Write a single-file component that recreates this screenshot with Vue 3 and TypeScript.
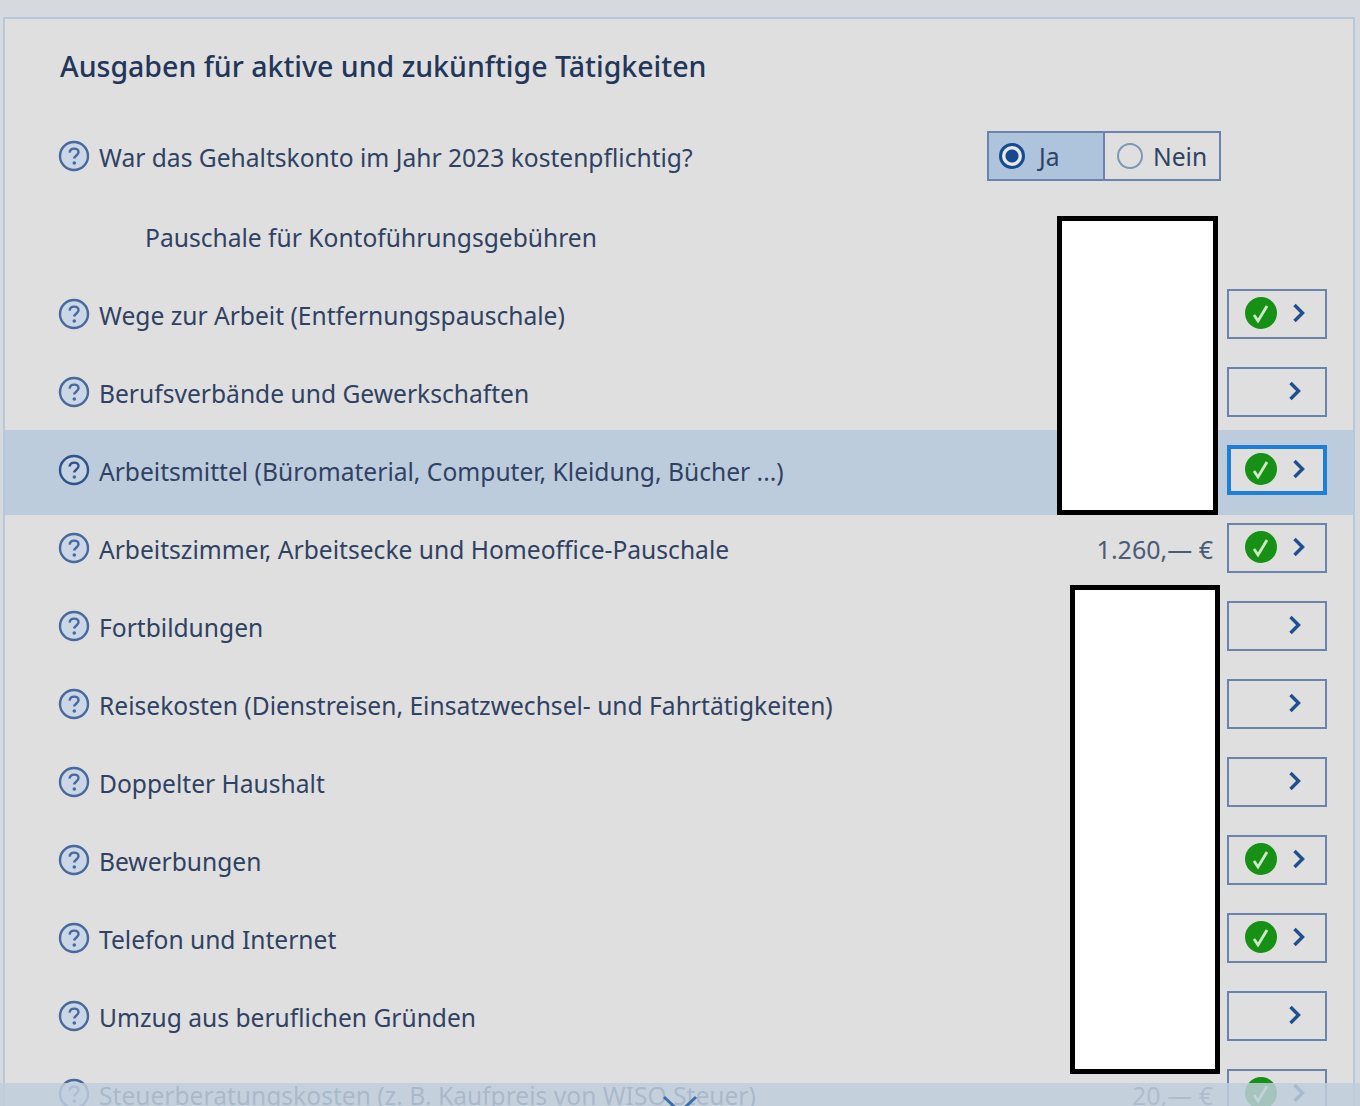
<script setup lang="ts">
interface Row {
  label: string
  indent?: boolean
  help?: boolean
  check?: boolean
  amount?: string
  active?: boolean
  noButton?: boolean
}

const rows: Row[] = [
  { label: 'Pauschale für Kontoführungsgebühren', indent: true, noButton: true },
  { label: 'Wege zur Arbeit (Entfernungspauschale)', help: true, check: true },
  { label: 'Berufsverbände und Gewerkschaften', help: true },
  { label: 'Arbeitsmittel (Büromaterial, Computer, Kleidung, Bücher ...)', help: true, check: true, active: true },
  { label: 'Arbeitszimmer, Arbeitsecke und Homeoffice-Pauschale', help: true, check: true, amount: '1.260,— €' },
  { label: 'Fortbildungen', help: true },
  { label: 'Reisekosten (Dienstreisen, Einsatzwechsel- und Fahrtätigkeiten)', help: true },
  { label: 'Doppelter Haushalt', help: true },
  { label: 'Bewerbungen', help: true, check: true },
  { label: 'Telefon und Internet', help: true, check: true },
  { label: 'Umzug aus beruflichen Gründen', help: true },
  { label: 'Steuerberatungskosten (z. B. Kaufpreis von WISO Steuer)', help: true, check: true, amount: '20,— €' }
]
</script>

<template>
  <div class="page">
    <section class="panel">
      <h1 class="title">Ausgaben für aktive und zukünftige Tätigkeiten</h1>

      <div class="row first-row">
        <svg class="help" viewBox="0 0 32 32" aria-hidden="true">
          <circle cx="16" cy="16" r="14" />
          <path d="M11.6 12.600c.3-2.600 2.200-4 4.600-4 2.600 0 4.300 1.500 4.300 3.600 0 3.200-4.200 3.300-4.200 6.400" />
          <circle class="dot" cx="16.300" cy="23" r="1.800" />
        </svg>
        <span class="label">War das Gehaltskonto im Jahr 2023 kostenpflichtig?</span>
        <div class="segment">
          <div class="option selected">
            <span class="radio on"></span>
            <span>Ja</span>
          </div>
          <div class="option">
            <span class="radio"></span>
            <span>Nein</span>
          </div>
        </div>
      </div>

      <div v-for="row in rows" :key="row.label" class="row" :class="{ active: row.active }">
        <svg v-if="row.help" class="help" viewBox="0 0 32 32" aria-hidden="true">
          <circle cx="16" cy="16" r="14" />
          <path d="M11.6 12.600c.3-2.600 2.200-4 4.600-4 2.600 0 4.300 1.500 4.300 3.600 0 3.200-4.200 3.300-4.200 6.400" />
          <circle class="dot" cx="16.300" cy="23" r="1.800" />
        </svg>
        <span class="label" :class="{ indent: row.indent }">{{ row.label }}</span>
        <span v-if="row.amount" class="amount">{{ row.amount }}</span>
        <button v-if="!row.noButton" class="go" :class="{ focus: row.active, checked: row.check }" type="button">
          <svg v-if="row.check" class="ok" viewBox="0 0 32 32" aria-hidden="true">
            <circle cx="16" cy="16" r="16" />
            <path d="M9 18l4 6L22 9" />
          </svg>
          <svg class="chev" viewBox="0 0 14 20" aria-hidden="true">
            <path d="M2.500 2l8 8-8 8" />
          </svg>
        </button>
      </div>

      <div class="redact first"></div>
      <div class="redact second"></div>
    </section>

    <div class="footer-fade">
      <svg class="scroll-hint" viewBox="0 0 36 23" aria-hidden="true">
        <path d="M2 14l16 15 16-15" />
      </svg>
    </div>
  </div>
</template>

<style>
html,
body {
  margin: 0;
  height: 1106px;
  overflow: hidden;
  background: #d6dadf;
}
</style>

<style scoped>
.page {
  position: relative;
  height: 1106px;
  overflow: hidden;
  padding: 17px 5px 0 3px;
  box-sizing: border-box;
  background: #d6dadf;
  font-family: "Noto Sans", "Open Sans", sans-serif;
  color: #2f4263;
}

.panel {
  position: relative;
  height: 1200px;
  box-sizing: border-box;
  border: 2px solid #b7c8da;
  background: #dfdfdf;
  padding-top: 28px;
}

.title {
  margin: 0 0 32px 55px;
  height: 38px;
  font-size: 28.500px;
  line-height: 38px;
  font-weight: 500;
  color: #22365a;
}

.row {
  display: flex;
  align-items: center;
  height: 78px;
  padding: 0 26px 0 53px;
  box-sizing: border-box;
}

.row.first-row {
  height: 80px;
  padding-bottom: 2px;
}

.row.active {
  height: 85px;
  margin: -1px 0 -6px;
  padding-bottom: 5px;
  background: #bdccdc;
}

.row.active .help {
  stroke: #2f5488;
}

.help {
  flex: none;
  width: 32px;
  height: 32px;
  margin-right: 9px;
  fill: none;
  stroke: #47699c;
  stroke-width: 2.400;
}

.help circle:first-child {
  fill: #cbd7e6;
}

.row.active .help circle:first-child {
  fill: #c5d3e3;
}

.help .dot {
  fill: #47699c;
  stroke: none;
}

.label {
  flex: 1;
  padding-top: 3px;
  font-size: 24.600px;
  line-height: 34px;
  white-space: nowrap;
}

.label.indent {
  padding-left: 87px;
}

.amount {
  margin-right: 14px;
  padding-top: 1px;
  font-size: 25px;
  line-height: 34px;
  color: #4a5c78;
}

.segment {
  display: flex;
  width: 234px;
  height: 50px;
  margin-right: 106px;
  box-sizing: border-box;
  border: 2px solid #6a84ad;
}

.option {
  display: flex;
  align-items: center;
  gap: 10px;
  padding-left: 12px;
  font-size: 24.600px;
  box-sizing: border-box;
  flex: 1;
}

.option + .option {
  border-left: 2px solid #6a84ad;
}

.option.selected {
  width: 114px;
  flex: none;
  gap: 14px;
  padding-left: 10px;
  background: #aec3dc;
}

.radio {
  flex: none;
  width: 26px;
  height: 26px;
  box-sizing: border-box;
  border: 2px solid #7c97b8;
  border-radius: 50%;
  background: #dfdfdf;
}

.radio.on {
  border: 3px solid #174a8c;
  background: radial-gradient(circle, #174a8c 0 6px, #e4e8ee 7px);
}

.go {
  flex: none;
  display: flex;
  align-items: center;
  justify-content: flex-end;
  width: 100px;
  height: 50px;
  margin-left: auto;
  padding: 0 23px 0 0;
  box-sizing: border-box;
  border: 2px solid #6a84ad;
  background: #dfdfdf;
}

.go.checked {
  justify-content: flex-start;
  padding-left: 16px;
}

.go.focus {
  border: 4px solid #1f7fd6;
  padding-left: 14px;
}

.ok {
  flex: none;
  width: 32px;
  height: 32px;
  margin: -2px 15px 0 0;
}

.ok circle {
  fill: #179016;
}

.ok path {
  fill: none;
  stroke: #cfe8c8;
  stroke-width: 2.800;
}

.chev {
  flex: none;
  width: 14px;
  height: 20px;
  margin-top: -2px;
  fill: none;
  stroke: #1f4f8f;
  stroke-width: 3.400;
}

.redact {
  position: absolute;
  box-sizing: border-box;
  border: 5px solid #000;
  background: #fff;
}

.redact.first {
  left: 1052px;
  top: 197px;
  width: 161px;
  height: 299px;
}

.redact.second {
  left: 1065px;
  top: 566px;
  width: 150px;
  height: 489px;
}

.footer-fade {
  position: absolute;
  left: 0;
  right: 0;
  bottom: 0;
  height: 23px;
  background: rgba(192, 206, 220, 0.85);
}

.scroll-hint {
  position: absolute;
  left: 662px;
  top: 0;
  width: 36px;
  height: 23px;
  fill: none;
  stroke: #3f6fa8;
  stroke-width: 3;
}
</style>
